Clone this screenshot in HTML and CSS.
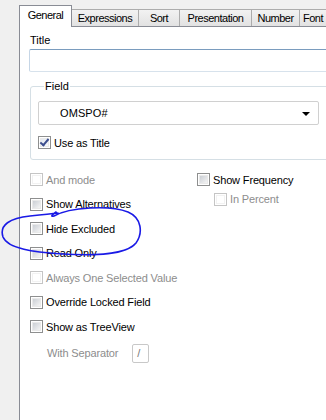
FILE: index.html
```html
<!DOCTYPE html>
<html lang="en">
<head>
  <meta charset="UTF-8">
  <title>List Box Properties</title>
  <link rel="stylesheet" href="styles.css">
</head>
<body>
  <div class="window">
    <div class="tabs">
      <div class="tab active">General</div>
      <div class="tab t-expr">Expressions</div>
      <div class="tab t-sort">Sort</div>
      <div class="tab t-pres">Presentation</div>
      <div class="tab t-num">Number</div>
      <div class="tab t-font">Font</div>
    </div>

    <div class="panel">
      <div class="caption">Title</div>
      <div class="textbox"></div>

      <fieldset class="group">
        <legend>Field</legend>
        <div class="combo">
          <span class="combo-value">OMSPO#</span>
          <span class="combo-arrow"></span>
        </div>
        <div class="check-row">
          <span class="box checked"></span>
          <span>Use as Title</span>
        </div>
      </fieldset>

      <div class="options">
        <div class="col">
          <div class="check-row disabled"><span class="box"></span><span>And mode</span></div>
          <div class="check-row"><span class="box"></span><span>Show Alternatives</span></div>
          <div class="check-row"><span class="box"></span><span>Hide Excluded</span></div>
          <div class="check-row"><span class="box"></span><span>Read Only</span></div>
          <div class="check-row disabled"><span class="box"></span><span>Always One Selected Value</span></div>
          <div class="check-row"><span class="box"></span><span>Override Locked Field</span></div>
          <div class="check-row"><span class="box"></span><span>Show as TreeView</span></div>
          <div class="separator-row">
            <span>With Separator</span>
            <span class="sep-box">/</span>
          </div>
        </div>
        <div class="col">
          <div class="check-row"><span class="box"></span><span>Show Frequency</span></div>
          <div class="check-row sub disabled"><span class="box"></span><span>In Percent</span></div>
        </div>
      </div>
    </div>

    <!-- hand drawn annotation -->
    <svg class="scribble" width="150" height="60" viewBox="0 0 150 60">
      <path d="M56 9 C 52 12, 50 14, 54 13 C 70 4, 110 2, 128 9 C 142 15, 143 30, 136 40 C 126 52, 96 53, 62 51 C 34 49, 8 46, 3 34 C -1 22, 10 15, 30 13 C 40 12, 50 11, 58 10"
            fill="none" stroke="#1a1ae6" stroke-width="1.6" stroke-linecap="round"/>
    </svg>
  </div>
</body>
</html>
```

FILE: styles.css
```css
body {
  margin: 0;
  background: #f0f0f0;
  font-family: "Liberation Sans", Arial, sans-serif;
  font-size: 11px;
  color: #000;
  overflow: hidden;
}
.window {
  position: relative;
  width: 360px;
  height: 420px;
  padding: 5px 0 0 19px;
  box-sizing: border-box;
}
.tabs {
  display: flex;
  align-items: flex-end;
  height: 21px;
  position: relative;
  z-index: 2;
}
.tab {
  flex: none;
  height: 17px;
  box-sizing: border-box;
  padding: 2px 0 0;
  text-align: center;
  white-space: nowrap;
  border: 1px solid #acacac;
  border-bottom: none;
  border-left: none;
  background: linear-gradient(#f2f2f2, #e2e2e2);
  letter-spacing: -0.5px;
}
.tab.active {
  width: 53px;
  height: 22px;
  margin-bottom: -1px;
  padding-top: 3px;
  background: #fff;
  border-color: #898c95;
  border-left: 1px solid #898c95;
  border-right: 1px solid #898c95;
}
.t-expr { width: 67px; }
.t-sort { width: 41px; }
.t-pres { width: 72px; }
.t-num { width: 48px; }
.t-font {
  width: 40px;
  text-align: left;
  padding-left: 3px;
}

.panel {
  width: 320px;
  height: 400px;
  box-sizing: border-box;
  background: #fff;
  border-top: 1px solid #898c95;
  border-left: 1px solid #898c95;
  padding: 6px 10px 0 9px;
}
.caption {
  height: 14px;
  line-height: 14px;
  padding-left: 1px;
}
.textbox {
  height: 23px;
  margin-top: 2px;
  box-sizing: border-box;
  border: 1px solid #abadb3;
  border-top-color: #7a9cbe;
  border-left-color: #c6d6e6;
  border-bottom-color: #d7e2ec;
  border-radius: 2px;
}
.group {
  margin: 8px 0 0 1px;
  padding: 6px 9px 8px 7px;
  border: 1px solid #d5dfe5;
  border-radius: 3px;
  height: 80px;
  box-sizing: border-box;
  position: relative;
}
.group legend {
  padding: 0 1px;
  margin-left: 6px;
  line-height: 12px;
}
.combo {
  display: flex;
  align-items: center;
  height: 24px;
  box-sizing: border-box;
  border: 1px solid #d0d0d0;
  border-radius: 2px;
  padding: 0 8px 0 21px;
  margin-top: 3px;
}
.combo-value {
  flex: 1;
  letter-spacing: 0.1px;
}
.combo-arrow {
  width: 0;
  height: 0;
  border-left: 4px solid transparent;
  border-right: 4px solid transparent;
  border-top: 4px solid #000;
  margin-top: 2px;
}
.check-row {
  display: flex;
  align-items: center;
  gap: 3px;
  height: 13px;
  letter-spacing: -0.15px;
}
.group .check-row {
  margin-top: 11px;
}
.box {
  width: 13px;
  height: 13px;
  box-sizing: border-box;
  border: 1px solid #8e8f8f;
  background: #fff;
  position: relative;
  flex: none;
}
.box::before {
  content: "";
  position: absolute;
  inset: 1px;
  background: linear-gradient(135deg, #cbcfd5, #f4f4f4);
  border: 1px solid #e9e9e9;
  box-sizing: border-box;
}
.box.checked::before {
  background: linear-gradient(135deg, #e3e8f0, #f7f9fb);
}
.box.checked::after {
  content: "";
  position: absolute;
  left: 3px;
  top: 0px;
  width: 3px;
  height: 7px;
  border-right: 2px solid #3c4e8e;
  border-bottom: 2px solid #3c4e8e;
  transform: rotate(40deg);
}
.disabled {
  color: #8d8d8d;
}
.disabled .box {
  border-color: #c5c5c5;
}
.disabled .box::before {
  background: #fff;
  border-color: #f2f2f2;
}
.options {
  display: grid;
  grid-template-columns: 167px 1fr;
  margin: 13px 0 0 1px;
}
.col .check-row {
  margin-bottom: 11.5px;
}
.col .check-row.sub {
  margin: -5px 0 0 17px;
}
.separator-row {
  display: flex;
  align-items: center;
  height: 19px;
  margin: -1px 0 0 17px;
  color: #8d8d8d;
  letter-spacing: -0.15px;
}
.sep-box {
  width: 17px;
  height: 19px;
  box-sizing: border-box;
  border: 1px solid #c8c8c8;
  border-radius: 2px;
  margin-left: 14px;
  padding: 2px 0 0 4px;
  color: #777;
}
.scribble {
  position: absolute;
  left: 0;
  top: 203px;
  overflow: visible;
}
```
